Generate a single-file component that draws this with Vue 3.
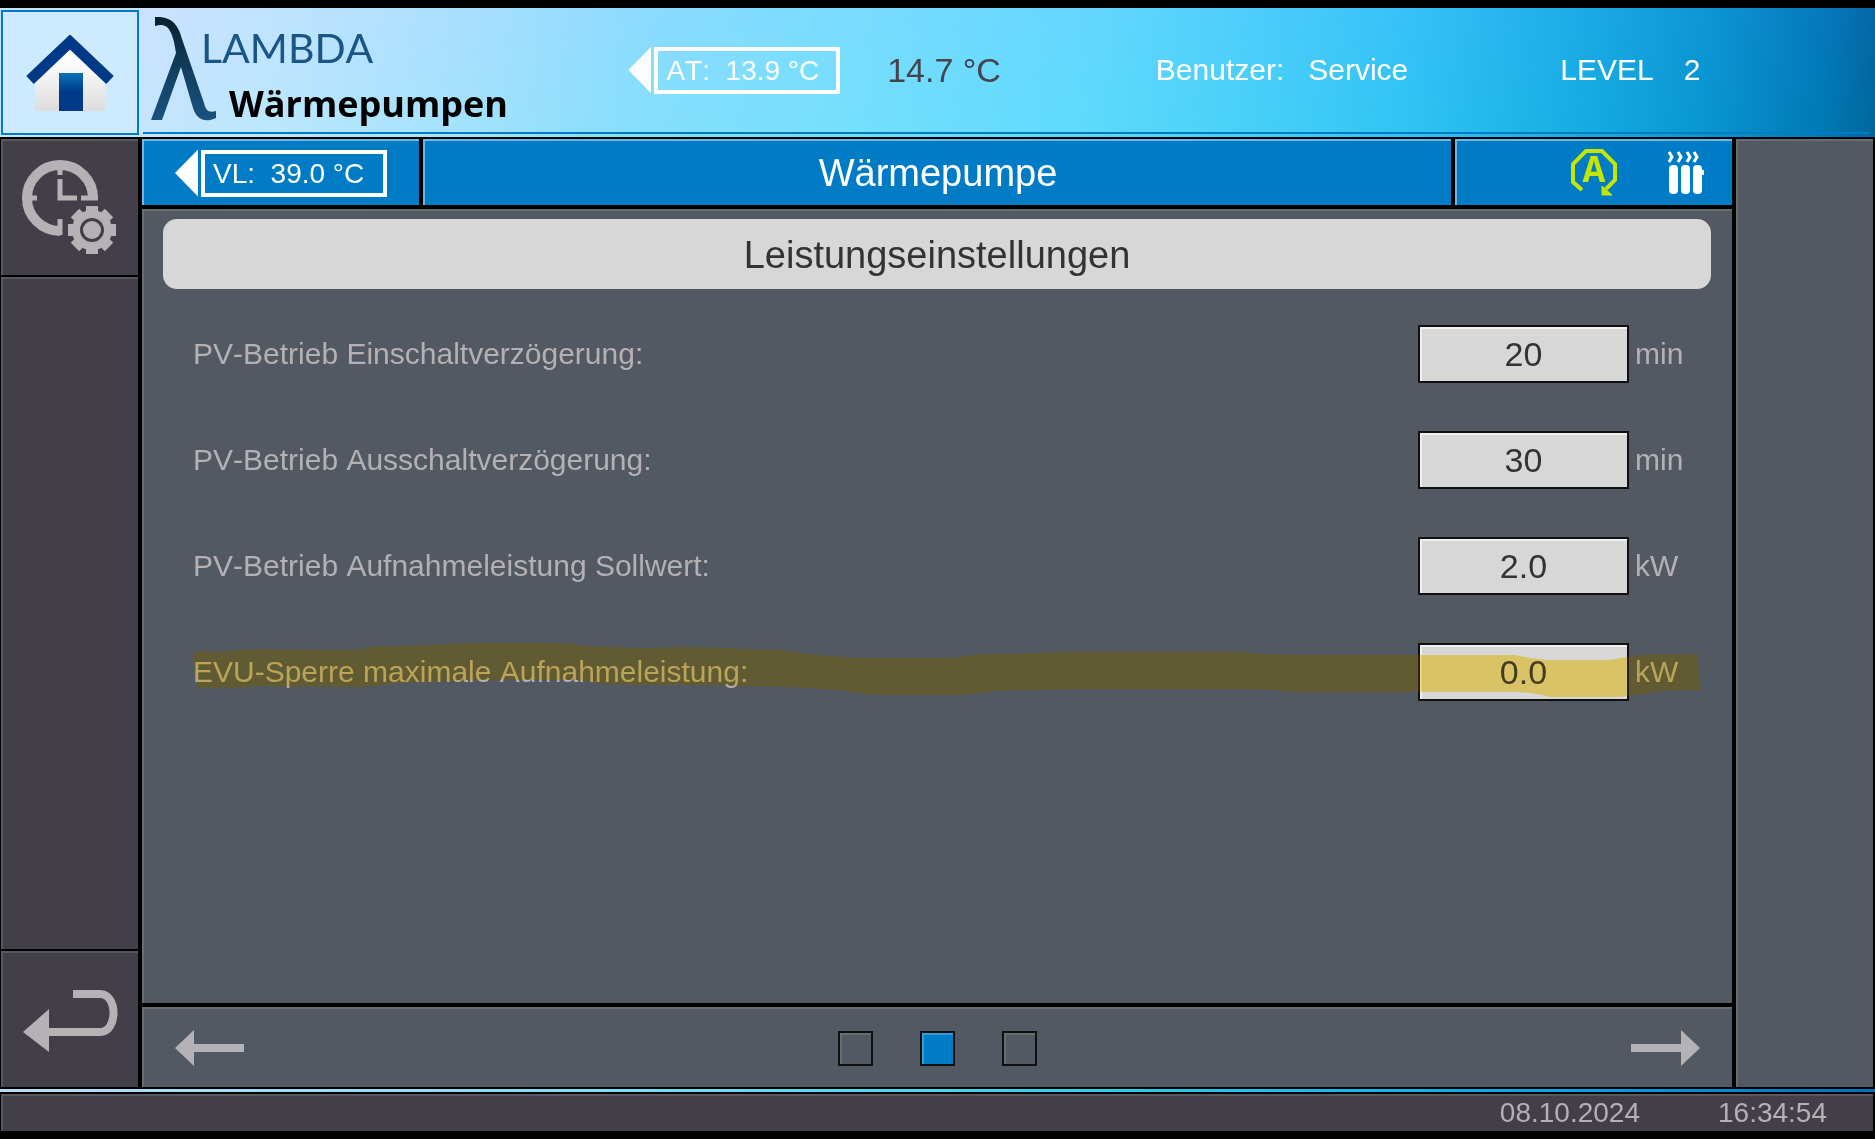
<script setup>
import { ref } from "vue"

const rows = ref([
  { id: "pv-on", label: "PV-Betrieb Einschaltverzögerung:", value: "20", unit: "min" },
  { id: "pv-off", label: "PV-Betrieb Ausschaltverzögerung:", value: "30", unit: "min" },
  { id: "pv-power", label: "PV-Betrieb Aufnahmeleistung Sollwert:", value: "2.0", unit: "kW" },
  { id: "evu-max", label: "EVU-Sperre maximale Aufnahmeleistung:", value: "0.0", unit: "kW", marked: true },
])

const page = ref(1)
const pages = 3
const teeth = [0, 45, 90, 135, 180, 225, 270, 315]

// outline of the marker stroke over the last row
const marker =
  "M0 11 L3 8 L27 9 Q50 6 67 6 L137 7 L162 7 Q180 3 200 3 L237 2 Q260 0 287 0 L377 0 Q395 4 410 4 L447 5 L507 4 L587 7 Q640 15 677 15 L762 15 Q780 11 800 11 L882 9 L1047 9 Q1080 12 1102 12 L1322 12 Q1345 17 1357 17 L1417 17 Q1445 11 1467 11 L1504 11 L1508 47 L1467 48 Q1440 54 1417 54 L1357 54 Q1340 49 1322 49 L1102 49 Q1080 46 1047 46 L882 46 L800 48 Q780 52 762 52 L677 52 Q640 45 587 44 L507 42 L447 42 L410 41 Q395 37 377 37 L287 37 L237 39 L200 40 Q180 44 162 44 L137 44 L67 43 Q40 46 5 45 Z"
</script>

<template>
<div class="screen">
  <header class="top">
    <button class="home" aria-label="Home">
      <svg width="88" height="76" viewBox="0 0 88 76">
        <defs>
          <linearGradient id="wall" x1="0" y1="0" x2="0" y2="1">
            <stop offset="0.2" stop-color="#fff"/>
            <stop offset="1" stop-color="#dcdcdc"/>
          </linearGradient>
          <linearGradient id="door" x1="0" y1="0" x2="0" y2="1">
            <stop offset="0" stop-color="#0a70b8"/>
            <stop offset="0.5" stop-color="#003a86"/>
          </linearGradient>
        </defs>
        <path d="M9 46 L44 12 L79 46 V76 H9 Z" fill="url(#wall)"/>
        <rect x="33" y="38" width="24" height="38" fill="url(#door)"/>
        <path d="M4 45 L44 7 L84 45" fill="none" stroke="#003a86" stroke-width="11"/>
      </svg>
    </button>
    <div class="top-row">
      <div class="logo">
        <svg class="lambda" width="66" height="106" viewBox="0 0 66 106">
          <defs>
            <linearGradient id="lam" x1="0" y1="0" x2="0" y2="1">
              <stop offset="0" stop-color="#08202e"/>
              <stop offset="0.55" stop-color="#114062"/>
              <stop offset="1" stop-color="#1a5280"/>
            </linearGradient>
          </defs>
          <path d="M4 0 C20 -1 27 7 31 22 L53 86 C55 94 58 96 65 94 V101 C54 106 46 103 42 91 L30 50 L11 103 H0 L25 36 L23 25 C19 9 14 6 4 9 Z" fill="url(#lam)"/>
        </svg>
        <div class="brand">
          <span class="brand-a">LAMBDA</span>
          <span class="brand-b">Wärmepumpen</span>
        </div>
      </div>
      <div class="tag"><i></i><span>AT:&nbsp; 13.9 °C</span></div>
      <div class="temp">14.7 °C</div>
      <div class="user"><span>Benutzer:</span><span>Service</span></div>
      <div class="level"><span>LEVEL</span><span>2</span></div>
    </div>
  </header>

  <div class="middle">
    <nav class="side">
      <button class="side-btn" aria-label="Zeitprogramm">
        <svg width="98" height="96" viewBox="22 160 98 96">
          <path d="M93 198 A33 33 0 1 0 60 231" fill="none" stroke="#b5b2b5" stroke-width="10"/>
          <path d="M81 198 H98 M31 198 H37 M60 219 V235 M60 169 V175" fill="none" stroke="#b5b2b5" stroke-width="5"/>
          <path d="M60 179 V198 H77" fill="none" stroke="#b5b2b5" stroke-width="5"/>
          <circle cx="92" cy="230" r="16" fill="none" stroke="#b5b2b5" stroke-width="8"/>
          <rect v-for="a in teeth" :key="a" x="86" y="206" width="12" height="9" fill="#b5b2b5" :transform="`rotate(${a} 92 230)`"/>
          <circle cx="92" cy="230" r="9" fill="#b5b2b5"/>
        </svg>
      </button>
      <div class="side-fill"></div>
      <button class="side-btn back" aria-label="Zurück">
        <svg width="96" height="64" viewBox="0 0 96 64">
          <path d="M50 6 H77 C95 6 95 44 77 44 H26" fill="none" stroke="#b5b2b5" stroke-width="8"/>
          <path d="M0 44 L26 21 V64 Z" fill="#b5b2b5"/>
        </svg>
      </button>
    </nav>

    <main class="content">
      <div class="bar">
        <div class="bar-cell first">
          <div class="tag"><i></i><span>VL:&nbsp; 39.0 °C</span></div>
        </div>
        <h1 class="bar-cell">Wärmepumpe</h1>
        <div class="bar-cell icons">
          <svg width="48" height="48" viewBox="1570 149 48 48">
            <path d="M1582 190 L1573 182 V164 L1586 151 H1602 L1615 164 V180 L1606 189" fill="none" stroke="#c4e600" stroke-width="4"/>
            <path d="M1602 186 V195 H1612 Z" fill="#c4e600" stroke="#c4e600"/>
            <text x="1594" y="182" text-anchor="middle" class="auto">A</text>
          </svg>
          <svg width="38" height="44" viewBox="0 0 38 44">
            <g fill="#fff">
              <rect x="1" y="14" width="9" height="29" rx="4"/>
              <rect x="13" y="14" width="9" height="29" rx="4"/>
              <rect x="25" y="14" width="9" height="29" rx="4"/>
              <rect x="32" y="19" width="4" height="5"/>
            </g>
            <path d="M1 1 L4 6 L1 11 M10 1 L13 6 L10 11 M19 1 L22 6 L19 11 M26 1 L29 6 L26 11" fill="none" stroke="#fff" stroke-width="3"/>
          </svg>
        </div>
      </div>

      <section class="panel">
        <h2>Leistungseinstellungen</h2>
        <div class="rows">
          <div v-for="r in rows" :key="r.id" class="row">
            <label :for="r.id">{{ r.label }}</label>
            <input :id="r.id" v-model="r.value" type="text">
            <span class="unit">{{ r.unit }}</span>
            <svg v-if="r.marked" class="marker" viewBox="0 0 1509 58" preserveAspectRatio="none">
              <path :d="marker" fill="#ffe67d" class="mul"/>
              <path :d="marker" fill="#ffd25a" fill-opacity="0.09"/>
            </svg>
          </div>
        </div>
      </section>

      <div class="pager">
        <button class="arrow" aria-label="Vorherige Seite" @click="page = Math.max(0, page - 1)">
          <svg width="69" height="36" viewBox="0 0 69 36"><path d="M0 18 L19 0 V14 H69 V22 H19 V36 Z" fill="#b5b2b5"/></svg>
        </button>
        <div class="dots">
          <button v-for="n in pages" :key="n" class="dot" :class="{ active: n - 1 === page }" :aria-label="'Seite ' + n" @click="page = n - 1"></button>
        </div>
        <button class="arrow" aria-label="Nächste Seite" @click="page = Math.min(pages - 1, page + 1)">
          <svg width="69" height="36" viewBox="0 0 69 36"><path d="M69 18 L50 0 V14 H0 V22 H50 V36 Z" fill="#b5b2b5"/></svg>
        </button>
      </div>
    </main>

    <aside class="right"></aside>
  </div>

  <div class="stripe"></div>

  <footer class="foot">
    <span>08.10.2024</span>
    <span>16:34:54</span>
  </footer>
</div>
</template>

<style>
body {
  background: #000;
}
</style>

<style scoped>
.screen {
  box-sizing: border-box;
  min-height: 100vh;
  padding: 8px 0;
  display: flex;
  flex-direction: column;
  background: #000;
  font-family: "Liberation Sans", Arial, sans-serif;
  font-size: 30px;
  line-height: 36px;
  font-kerning: none;
}

button {
  padding: 0;
  border: 0;
  background: none;
  display: flex;
  align-items: center;
  justify-content: center;
  cursor: pointer;
}

h1, h2 {
  margin: 0;
  font-size: 38px;
  line-height: 44px;
  font-weight: normal;
}

svg {
  display: block;
}

/* header */
.top {
  height: 129px;
  display: flex;
  background:
    linear-gradient(to bottom, rgba(80, 150, 255, 0.06), rgba(0, 220, 200, 0.06)),
    linear-gradient(97deg, #cfe9ff 0%, #d2e6ff 8%, #c6e8ff 15%, #abe2ff 26%, #8fdfff 34%, #7ce0ff 45%, #64daff 58%, #4dd1fb 66%, #33c3f6 75%, #18abe4 84%, #0892d0 91%, #0074b4 97%, #005f98 100%);
}

.home {
  flex: none;
  box-sizing: border-box;
  width: 138px;
  height: 125px;
  margin: 2px 4px 2px 1px;
  border: 2px solid #007cc6;
  background: #cdeaff;
}

.top-row {
  flex: 1;
  display: grid;
  grid-template-columns: 486fr 259fr 269fr 405fr 309fr;
  align-items: center;
  margin-right: 6px;
  margin-bottom: 3px;
  border-bottom: 2px solid #007cc6;
  color: #fff;
}

.logo {
  display: flex;
  padding-left: 8px;
  align-items: center;
}

.brand {
  display: flex;
  flex-direction: column;
  padding-top: 10px;
}

.brand-a {
  margin-left: -16px;
  font-family: Lato, sans-serif;
  font-size: 41px;
  line-height: 58px;
  color: #1b5585;
}

.brand-b {
  padding-left: 12px;
  font-family: "Open Sans", sans-serif;
  font-size: 36px;
  line-height: 54px;
  font-weight: bold;
  color: #000;
}

.temp {
  font-size: 34px;
  color: #45434c;
}

.user {
  display: flex;
  gap: 24px;
}

.level {
  display: flex;
  gap: 30px;
}

/* temperature tag with a pointer on its left */
.tag {
  display: flex;
  gap: 3px;
  color: #fff;
  font-size: 28px;
}

.tag i {
  width: 23px;
  background: #fff;
  clip-path: polygon(0 50%, 100% 0, 100% 100%);
}

.tag span {
  box-sizing: border-box;
  width: 186px;
  height: 47px;
  padding-left: 8px;
  border: 4px solid #fff;
  line-height: 39px;
  white-space: nowrap;
}

/* middle part */
.middle {
  flex: 1;
  display: flex;
  gap: 4px;
  margin-top: 2px;
}

.side {
  width: 138px;
  display: flex;
  flex-direction: column;
  gap: 2px;
}

.side-btn, .side-fill {
  box-sizing: border-box;
  margin-left: 1px;
  background: #433f49;
  border-top: 2px solid #565960;
  border-left: 2px solid #565960;
}

.side-btn {
  height: 136px;
}

.side-fill {
  flex: 1;
}

.content {
  flex: 1;
  display: flex;
  flex-direction: column;
  gap: 4px;
}

.bar {
  height: 66px;
  display: grid;
  grid-template-columns: 277px 1fr 277px;
  gap: 4px;
}

.bar-cell {
  box-sizing: border-box;
  display: flex;
  align-items: center;
  justify-content: center;
  background: #007cc6;
  border-top: 2px solid #6fb6e0;
  border-left: 2px solid #6fb6e0;
  color: #fff;
}

.first {
  justify-content: flex-start;
  padding-left: 31px;
}

.icons {
  justify-content: flex-end;
  gap: 50px;
  padding-right: 26px;
}

.auto {
  font-family: "Liberation Mono", monospace;
  font-size: 38px;
  font-weight: bold;
  fill: #c4e600;
}

.panel, .pager, .right {
  box-sizing: border-box;
  background: #525962;
  border-top: 2px solid #656e70;
  border-left: 2px solid #656e70;
}

.panel {
  flex: 1;
}

h2 {
  margin: 8px 21px 0 19px;
  padding: 14px 0 12px;
  border-radius: 14px;
  background: #d7d7d7;
  color: #333;
  text-align: center;
}

.rows {
  display: flex;
  flex-direction: column;
  gap: 48px;
  margin: 36px 30px 0 49px;
}

.row {
  position: relative;
  display: flex;
  align-items: center;
  color: #b5b0b4;
}

.row label {
  flex: 1;
}

.row input {
  box-sizing: border-box;
  width: 211px;
  height: 58px;
  padding: 0;
  border: 2px solid #101010;
  border-radius: 0;
  outline: none;
  background: #d7d7d7;
  box-shadow: inset 2px 2px #f0f0f0;
  color: #333;
  font-family: inherit;
  font-size: 34px;
  text-align: center;
}

.unit {
  width: 67px;
  padding-left: 6px;
}

.marker {
  position: absolute;
  left: 0;
  top: 0;
  width: 100%;
  height: 58px;
  pointer-events: none;
}

.mul {
  mix-blend-mode: multiply;
}

.pager {
  height: 80px;
  display: flex;
  align-items: center;
  justify-content: space-between;
  padding: 0 32px 0 31px;
}

.dots {
  display: flex;
  gap: 47px;
}

.dot {
  box-sizing: border-box;
  width: 35px;
  height: 35px;
  border: 2px solid #101010;
  box-shadow: inset 2px 2px #656e70;
}

.dot.active {
  background: #007cc6;
  box-shadow: inset 2px 2px #3a98d2;
}

.right {
  width: 137px;
  margin-right: 2px;
}

.stripe {
  height: 3px;
  margin: 2px 0;
  background: linear-gradient(to right, #b9dcf5, #7fdcf8 33%, #2cccee 60%, #08a0e4 85%, #0070b8);
}

/* footer */
.foot {
  box-sizing: border-box;
  height: 37px;
  margin: 0 2px 0 1px;
  padding-right: 46px;
  display: flex;
  justify-content: flex-end;
  gap: 78px;
  background: #433f49;
  border-top: 2px solid #565960;
  border-left: 2px solid #565960;
  color: #b5b0b4;
  font-size: 28px;
  line-height: 33px;
}
</style>
